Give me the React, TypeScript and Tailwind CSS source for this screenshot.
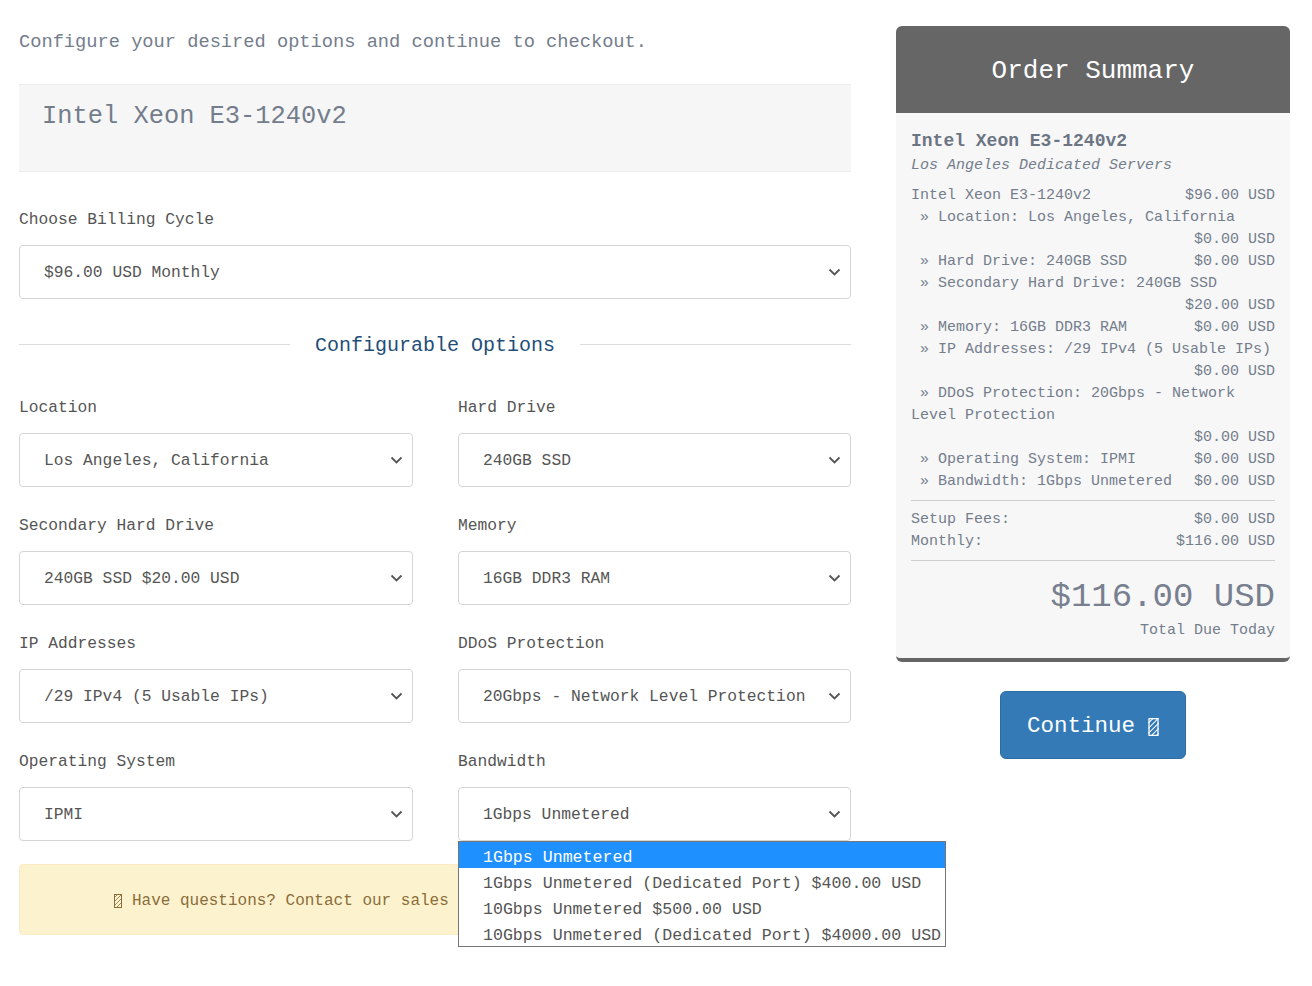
import React from 'react';

const mono = { fontFamily: '"Liberation Mono", "DejaVu Sans Mono", monospace' };

const Chevron = () => (
  <svg width="13" height="8" viewBox="0 0 13 8" className="shrink-0 text-[#555]">
    <path d="M1.5 1.5 6.5 6.5 11.5 1.5" fill="none" stroke="currentColor" strokeWidth="1.8" />
  </svg>
);

const Tofu = ({ className }: { className?: string }) => (
  <svg viewBox="0 0 8 14" className={className}>
    <rect x="0.5" y="0.5" width="7" height="13" fill="none" stroke="currentColor" strokeWidth="1" />
    <path d="M0 4 4 0M0 8 8 0M0 12 8 4M2 14 8 8M6 14 8 12" stroke="currentColor" strokeWidth="0.8" />
  </svg>
);

const Select = ({ value, open }: { value: string; open?: boolean }) => (
  <div className="relative">
    <div className="flex h-[54px] items-center justify-between rounded-[4px] border border-[#d5d5d5] bg-white pl-[24px] pr-[9px] text-[16.3px] text-[#555]">
      <span className="pt-[3px]">{value}</span>
      <Chevron />
    </div>
    {open && (
      <div className="absolute left-0 top-full z-10 w-[488px] border border-[#767676] bg-white text-[16.6px] text-[#555]">
        <div className="h-[26px] bg-[#1e90ff] pl-[24px] pt-[3px] leading-[26px] text-white">1Gbps Unmetered</div>
        <div className="h-[26px] pl-[24px] pt-[3px] leading-[26px]">1Gbps Unmetered (Dedicated Port) $400.00 USD</div>
        <div className="h-[26px] pl-[24px] pt-[3px] leading-[26px]">10Gbps Unmetered $500.00 USD</div>
        <div className="h-[26px] whitespace-nowrap pl-[24px] pt-[3px] leading-[26px]">10Gbps Unmetered (Dedicated Port) $4000.00 USD</div>
      </div>
    )}
  </div>
);

const Field = ({ label, value, open }: { label: string; value: string; open?: boolean }) => (
  <div>
    <div className="h-[24px] pt-[2px] text-[16.25px] leading-[24px] text-[#555]">{label}</div>
    <div className="mt-[15px]">
      <Select value={value} open={open} />
    </div>
  </div>
);

const fields = [
  { label: 'Location', value: 'Los Angeles, California' },
  { label: 'Hard Drive', value: '240GB SSD' },
  { label: 'Secondary Hard Drive', value: '240GB SSD $20.00 USD' },
  { label: 'Memory', value: '16GB DDR3 RAM' },
  { label: 'IP Addresses', value: '/29 IPv4 (5 Usable IPs)' },
  { label: 'DDoS Protection', value: '20Gbps - Network Level Protection' },
  { label: 'Operating System', value: 'IPMI' },
  { label: 'Bandwidth', value: '1Gbps Unmetered', open: true }
];

// [left, right] — an empty left means the price wrapped onto its own line
const lines: [string, string][] = [
  ['Intel Xeon E3-1240v2', '$96.00 USD'],
  [' » Location: Los Angeles, California', ''],
  ['', '$0.00 USD'],
  [' » Hard Drive: 240GB SSD', '$0.00 USD'],
  [' » Secondary Hard Drive: 240GB SSD', ''],
  ['', '$20.00 USD'],
  [' » Memory: 16GB DDR3 RAM', '$0.00 USD'],
  [' » IP Addresses: /29 IPv4 (5 Usable IPs)', ''],
  ['', '$0.00 USD'],
  [' » DDoS Protection: 20Gbps - Network', ''],
  ['Level Protection', ''],
  ['', '$0.00 USD'],
  [' » Operating System: IPMI', '$0.00 USD'],
  [' » Bandwidth: 1Gbps Unmetered', '$0.00 USD']
];

const App = () => (
  <div style={mono} className="flex min-h-[986px] gap-[45px] bg-white pl-[19px] pt-[27px]">
    <main className="w-[832px]">
      <p className="h-[26px] pt-[2px] text-[18.7px] leading-[26px] text-[#747d8c]">
        Configure your desired options and continue to checkout.
      </p>

      <div className="mt-[31px] h-[88px] border-y border-[#ececec] bg-[#f6f6f6] pl-[23px] pt-[14px]">
        <h1 className="text-[25.4px] leading-[36px] text-[#747d8c]">Intel Xeon E3-1240v2</h1>
      </div>

      <div className="mt-[34px] h-[24px] pt-[2px] text-[16.25px] leading-[24px] text-[#555]">Choose Billing Cycle</div>
      <div className="mt-[15px]">
        <Select value="$96.00 USD Monthly" />
      </div>

      <div className="mt-[31px] flex h-[28px] items-center">
        <div className="h-px flex-1 bg-[#dcdcdc]" />
        <h2 className="mx-[25px] pt-[3px] text-[20px] leading-[28px] text-[#1f4e79]">Configurable Options</h2>
        <div className="h-px flex-1 bg-[#dcdcdc]" />
      </div>

      <div className="mt-[36px] grid grid-cols-[394px_393px] gap-x-[45px] gap-y-[25px]">
        {fields.map((f) => (
          <Field key={f.label} label={f.label} value={f.value} open={f.open} />
        ))}
      </div>

      <div className="mt-[23px] flex h-[71px] items-center justify-center rounded-[4px] border border-[#faebc4] bg-[#fcf2cd] pt-[3px] text-[16px] text-[#8a6d3b]">
        <Tofu className="mr-[10px] h-[14px] w-[8px]" />
        <span>Have questions? Contact our sales team now. We are happy to help!</span>
      </div>
    </main>

    <aside className="mt-[-1px] w-[394px]">
      <div className="overflow-hidden rounded-[6px] border-b-4 border-[#666] bg-[#f7f7f7]">
        <div className="flex h-[87px] items-center justify-center bg-[#666] pt-[3px] text-[26px] text-white">
          Order Summary
        </div>
        <div className="px-[15px] pb-[16px] pt-[16px] text-[15px] text-[#747d8c]">
          <div className="text-[18px] font-bold leading-[24px] text-[#6c7584]">Intel Xeon E3-1240v2</div>
          <div className="mt-[1px] pt-[1px] italic leading-[22px]">Los Angeles Dedicated Servers</div>

          <div className="mt-[8px]">
            {lines.map(([l, r], i) => (
              <div key={i} className="flex h-[22px] justify-between whitespace-pre leading-[22px]">
                <span>{l}</span>
                <span>{r}</span>
              </div>
            ))}
          </div>

          <div className="mt-[7px] border-t border-[#cfcfcf]" />
          <div className="mt-[8px] flex justify-between leading-[22px]">
            <span>Setup Fees:</span>
            <span>$0.00 USD</span>
          </div>
          <div className="flex justify-between leading-[22px]">
            <span>Monthly:</span>
            <span>$116.00 USD</span>
          </div>
          <div className="mt-[7px] border-t border-[#cfcfcf]" />

          <div className="mt-[16px] text-right text-[34px] leading-[40px] text-[#788090]">$116.00 USD</div>
          <div className="mt-[3px] text-right leading-[22px]">Total Due Today</div>
        </div>
      </div>

      <div className="mt-[29px] flex justify-center">
        <button className="flex h-[68px] w-[186px] items-center justify-center rounded-[6px] border border-[#2e6da4] bg-[#337ab7] pt-[4px] text-[22.5px] text-white">
          Continue
          <Tofu className="ml-[13px] h-[18px] w-[11px]" />
        </button>
      </div>
    </aside>
  </div>
);

export default App;
